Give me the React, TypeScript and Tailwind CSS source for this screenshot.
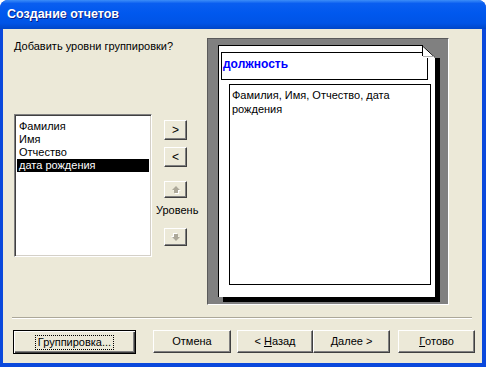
import React from 'react';

const raised =
  'bg-[#ece9d8] border border-t-white border-l-white border-r-[#404040] border-b-[#404040] shadow-[inset_-1px_-1px_0_#808080]';

const ArrowIcon = ({ down = false }: { down?: boolean }) => (
  <svg width="10" height="9" viewBox="0 0 10 9" className={down ? 'rotate-180' : ''}>
    <path d="M5 1 L9 5 H7 V8 H3 V5 H1 Z" fill="#ffffff" transform="translate(1 1)" />
    <path d="M5 1 L9 5 H7 V8 H3 V5 H1 Z" fill="#aca899" />
  </svg>
);

const Fold = () => (
  <svg
    width="19"
    height="14"
    viewBox="0 0 19 14"
    className="absolute left-[203px] top-[-2px]"
  >
    <rect width="19" height="14" fill="#808080" />
    <polygon points="0,1 13,14 0,14" fill="#ffffff" />
    <polygon points="0,1 12,12 0,12" fill="#ffffff" />
    <line x1="0.5" y1="1" x2="0.5" y2="12" stroke="#000" />
    <line x1="0" y1="1.5" x2="12.5" y2="13" stroke="#000" />
    <line x1="1" y1="12.5" x2="12" y2="12.5" stroke="#b4b4b4" />
  </svg>
);

const DialogButton = ({
  children,
  width,
  className = '',
}: {
  children: React.ReactNode;
  width: string;
  className?: string;
}) => (
  <div className={`${raised} ${width} h-[23px] flex items-center justify-center ${className}`}>
    {children}
  </div>
);

export default function App() {
  const fields = ['Фамилия', 'Имя', 'Отчество', 'дата рождения'];

  return (
    <div className="w-[486px] h-[367px] bg-white font-['Liberation_Sans',Arial,sans-serif] text-[11px] text-black">
      <div className="w-full h-full rounded-t-[8px] bg-[#0a48dc] flex flex-col overflow-hidden">
        {/* Title bar */}
        <div className="h-[29px] shrink-0 flex items-center pl-[7px] bg-[linear-gradient(to_bottom,#3c8df8_0%,#0a5ef0_12%,#0058ee_45%,#0054e6_80%,#0046c8_100%)]">
          <span className="text-white font-bold text-[12.5px] [text-shadow:1px_1px_0_#0a1e86]">
            Создание отчетов
          </span>
        </div>

        {/* Body */}
        <div className="flex-1 ml-[3px] mr-[4px] mb-[4px] bg-[#ece9d8] flex flex-col">
          <div className="h-[288px] flex items-start">
            {/* Left column */}
            <div className="ml-[11px] w-[138px] flex flex-col">
              <div className="mt-[11px] h-[13px] leading-[13px] whitespace-nowrap">
                Добавить уровни группировки?
              </div>
              <div className="mt-[61px] h-[143px] bg-white border border-t-[#808080] border-l-[#808080] border-r-white border-b-white shadow-[inset_1px_1px_0_#404040,inset_-1px_-1px_0_#d4d0c8] pt-[5px] px-[2px]">
                {fields.map((f, i) => (
                  <div
                    key={f}
                    className={`h-[13px] leading-[13px] px-[2px] ${
                      i === 3 ? 'bg-black text-white' : ''
                    }`}
                  >
                    {f}
                  </div>
                ))}
              </div>
            </div>

            {/* Middle buttons */}
            <div className="ml-[4px] w-[44px] flex flex-col">
              <div className={`${raised} ml-[8px] mt-[91px] w-[23px] h-[20px] flex items-center justify-center text-[12px]`}>
                &gt;
              </div>
              <div className={`${raised} ml-[8px] mt-[7px] w-[23px] h-[20px] flex items-center justify-center text-[12px]`}>
                &lt;
              </div>
              <div className={`${raised} ml-[8px] mt-[14px] w-[23px] h-[17px] flex items-center justify-center`}>
                <ArrowIcon />
              </div>
              <div className="mt-[6px] h-[13px] leading-[13px] whitespace-nowrap">Уровень</div>
              <div className={`${raised} ml-[8px] mt-[11px] w-[23px] h-[18px] flex items-center justify-center`}>
                <ArrowIcon down />
              </div>
            </div>

            {/* Preview */}
            <div className="ml-[7px] mt-[9px] w-[242px] h-[267px] bg-[#808080] border border-t-[#5a5a5a] border-l-[#5a5a5a] border-r-white border-b-white">
              <div className="relative ml-[10px] mt-[6px] w-[217px] h-[252px] bg-white border-l border-t border-black shadow-[5px_5px_0_#000] flex flex-col">
                <Fold />
                <div className="ml-[2px] mt-[6px] w-[207px] h-[28px] border border-black px-[1px] pt-[2px]">
                  <span className="text-[12px] font-bold text-[#0000ff]">должность</span>
                </div>
                <div className="ml-[10px] mt-[4px] w-[202px] h-[201px] border border-black pl-[2px] pt-[3px] leading-[14px]">
                  Фамилия, Имя, Отчество, дата рождения
                </div>
              </div>
            </div>
          </div>

          {/* Separator */}
          <div className="ml-[9px] mr-[10px] h-[2px] border-t border-t-[#aca899] border-b border-b-white" />

          {/* Bottom buttons */}
          <div className="mt-[11px] flex items-start">
            <div className="ml-[10px] w-[123px] h-[24px] border border-black bg-[#ece9d8] shadow-[inset_1px_1px_0_#fff,inset_-1px_-1px_0_#404040,inset_-2px_-2px_0_#808080] flex items-center justify-center">
              <span className="border border-dotted border-black px-[2px] leading-[13px]">
                Группировка...
              </span>
            </div>
            <DialogButton width="w-[78px]" className="ml-[17px]">
              Отмена
            </DialogButton>
            <DialogButton width="w-[76px]" className="ml-[6px]">
              &lt; <span className="underline ml-[3px]">Н</span>азад
            </DialogButton>
            <DialogButton width="w-[77px]">
              <span className="underline">Д</span>алее &gt;
            </DialogButton>
            <DialogButton width="w-[77px]" className="ml-[8px]">
              <span className="underline">Г</span>отово
            </DialogButton>
          </div>
        </div>
      </div>
    </div>
  );
}
